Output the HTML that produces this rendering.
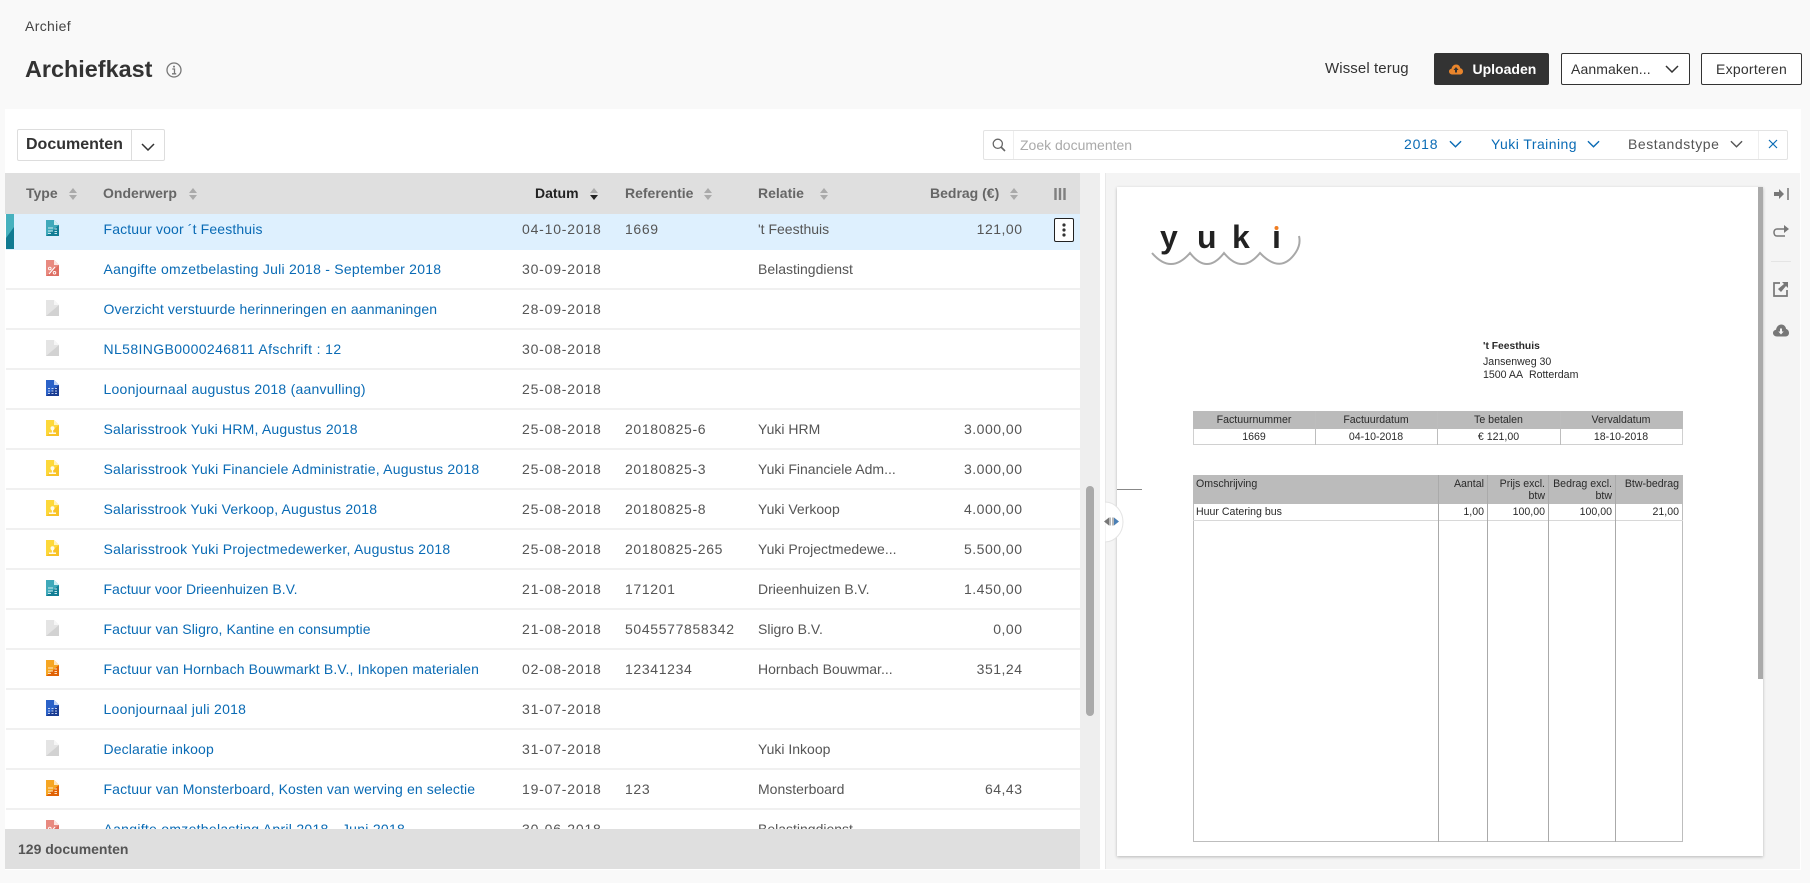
<!DOCTYPE html>
<html lang="nl"><head><meta charset="utf-8"><title>Archiefkast</title>
<style>
*{box-sizing:border-box}
html,body{margin:0;padding:0;width:1810px;height:883px;overflow:hidden;background:#f9f9f9;font-family:"Liberation Sans",sans-serif;color:#555}
.a{position:absolute;white-space:nowrap}
#panel{position:absolute;left:5px;top:109px;width:1796px;height:761px;background:#fff}
.btn{position:absolute;top:53px;height:32px;border:1px solid #333;border-radius:2px;background:#fff;color:#333;font-size:14px;line-height:30px;white-space:nowrap}
.hd{position:absolute;top:173px;height:41px;line-height:41px;font-size:14px;font-weight:bold;color:#666;white-space:nowrap}
#rows{position:absolute;left:6px;top:214px;width:1074px;height:615px;overflow:hidden}
.r{position:absolute;left:0;width:1074px;height:40px;border-bottom:2px solid #f0f0f0;font-size:14px;line-height:39px;color:#555}
.r span{position:absolute;top:0;white-space:nowrap}
.r svg{position:absolute;left:40px;top:10px;width:13px;height:16px}
.s{left:97.500px;color:#0a6bb5}.d{left:516px;letter-spacing:.8px}.f{left:619px;letter-spacing:.65px}.e{left:752px}
.b{right:57.500px;letter-spacing:.5px}
.doc{position:absolute;font-size:10.600px;color:#2a2a2a;line-height:12px;white-space:nowrap}
.ph{position:absolute;background:#bbb}
.ln{position:absolute;background:#bdbdbd}
.c{text-align:center}
</style></head><body>
<svg width="0" height="0" style="position:absolute">
<defs>
<symbol id="i-teal" viewBox="0 0 13 16"><path d="M0 0H8L13 5V16H0Z" fill="#3fa9ba"/><path d="M0 16L13 5V16Z" fill="#127d94"/><path d="M8 0L13 5H8Z" fill="#cfeef2"/><path d="M2 8H7M2 11H7M2 13.500H5M8.500 9H11M8.500 11.500H11M8.500 13.500H11" stroke="#e8f7f9" stroke-width="1" stroke-opacity=".85"/></symbol>
<symbol id="i-red" viewBox="0 0 13 16"><path d="M0 0H8L13 5V16H0Z" fill="#e88a80"/><path d="M0 16L13 5V16Z" fill="#dd6e63"/><path d="M8 0L13 5H8Z" fill="#fbe4e1"/><path d="M3 14L9 7" stroke="#fff" stroke-width="1"/><circle cx="3.800" cy="8.500" r="1.300" fill="none" stroke="#fff" stroke-width=".9"/><circle cx="8.500" cy="12.800" r="1.300" fill="none" stroke="#fff" stroke-width=".9"/></symbol>
<symbol id="i-gray" viewBox="0 0 13 16"><path d="M0 0H8L13 5V16H0Z" fill="#e4e4e4"/><path d="M0 16L13 5V16Z" fill="#d2d2d2"/><path d="M8 0L13 5H8Z" fill="#f6f6f6"/></symbol>
<symbol id="i-blue" viewBox="0 0 13 16"><path d="M0 0H8L13 5V16H0Z" fill="#2b62c8"/><path d="M0 16L13 5V16Z" fill="#1a3c92"/><path d="M8 0L13 5H8Z" fill="#c6d6f3"/><path d="M2 8.500H4M5.500 8.500H7.500M9 8.500H11M2 11H4M5.500 11H7.500M9 11H11M2 13.500H4M5.500 13.500H7.500M9 13.500H11" stroke="#dfe8fa" stroke-width="1" stroke-opacity=".85"/></symbol>
<symbol id="i-yellow" viewBox="0 0 13 16"><path d="M0 0H8L13 5V16H0Z" fill="#fdd83a"/><path d="M0 16L13 5V16Z" fill="#f8c326"/><path d="M8 0L13 5H8Z" fill="#fff3bd"/><circle cx="6.500" cy="8.300" r="2" fill="#fff" fill-opacity=".9"/><path d="M3 12.500H10V14H3Z" fill="#fff" fill-opacity=".9"/><path d="M5.800 10H7.200V12.500H5.800Z" fill="#fff" fill-opacity=".9"/></symbol>
<symbol id="i-orange" viewBox="0 0 13 16"><path d="M0 0H8L13 5V16H0Z" fill="#f6a623"/><path d="M0 16L13 5V16Z" fill="#e06206"/><path d="M8 0L13 5H8Z" fill="#fde6bf"/><path d="M2 8H7M2 11H7M2 13.500H5M8.500 9H11M8.500 11.500H11M8.500 13.500H11" stroke="#fff4e2" stroke-width="1" stroke-opacity=".85"/></symbol>
<symbol id="sort" viewBox="0 0 8 12"><path d="M4 0L8 5H0Z" fill="#aaa"/><path d="M4 12L8 7H0Z" fill="#aaa"/></symbol>
<symbol id="chev" viewBox="0 0 14 8"><path d="M1 1L7 7L13 1" fill="none" stroke="currentColor" stroke-width="1.500"/></symbol>
</defs></svg>

<div class="a" style="left:25px;top:18px;font-size:14px;letter-spacing:.35px;line-height:16px;color:#444">Archief</div>
<div class="a" style="left:25px;top:54px;font-size:23.400px;line-height:30px;font-weight:bold;color:#333">Archiefkast</div>
<svg class="a" style="left:166px;top:62px" width="16" height="16" viewBox="0 0 16 16"><circle cx="8" cy="8" r="7" fill="none" stroke="#777" stroke-width="1.300"/><circle cx="8" cy="4.600" r="1" fill="#777"/><path d="M6.300 7H8.500V11.500M6 11.800H10.200" fill="none" stroke="#777" stroke-width="1.300"/></svg>

<div class="a" style="left:1325px;top:61px;font-size:15px;letter-spacing:.1px;line-height:16px;color:#333">Wissel terug</div>
<div class="btn" style="left:1434px;width:115px;background:#333;color:#fff;font-weight:bold;padding-left:37.500px">Uploaden</div>
<svg class="a" style="left:1449px;top:64px" width="14" height="11" viewBox="0 0 14 11"><path d="M3.500 10.500C1.500 10.500 0 9.200 0 7.500C0 6 1.200 5 2.500 4.800C3 2.200 5 .5 7.200 .5C9.500 .5 11 2.200 11.300 4.300C12.800 4.500 14 5.800 14 7.500C14 9.200 12.800 10.500 11 10.500Z" fill="#e9852c"/><path d="M7 3L9.500 6H8V8.500H6V6H4.500Z" fill="#333"/></svg>
<div class="btn" style="left:1561px;width:129px;padding-left:9px;letter-spacing:.1px">Aanmaken...</div>
<svg class="a" style="left:1665px;top:65px;color:#333" width="14" height="8"><use href="#chev"/></svg>
<div class="btn" style="left:1701px;width:101px;text-align:center;letter-spacing:.25px">Exporteren</div>

<div id="panel"></div>

<div class="a" style="left:17px;top:129px;width:148px;height:32px;border:1px solid #ddd;border-radius:2px;background:#fff"></div>
<div class="a" style="left:131px;top:130px;width:1px;height:30px;background:#ddd"></div>
<div class="a" style="left:26px;top:135px;font-size:16px;line-height:19px;font-weight:bold;color:#333">Documenten</div>
<svg class="a" style="left:141px;top:143px;color:#333" width="14" height="8"><use href="#chev"/></svg>

<div class="a" style="left:983px;top:130px;width:805px;height:30px;border:1px solid #e3e3e3;border-radius:2px;background:#fff"></div>
<div class="a" style="left:1013px;top:131px;width:1px;height:28px;background:#eee"></div>
<div class="a" style="left:1758px;top:131px;width:1px;height:28px;background:#eee"></div>
<svg class="a" style="left:992px;top:138px" width="14" height="14" viewBox="0 0 14 14"><circle cx="5.800" cy="5.800" r="4.600" fill="none" stroke="#666" stroke-width="1.300"/><path d="M9 9L13 13" stroke="#666" stroke-width="1.600"/></svg>
<div class="a" style="left:1020px;top:137px;font-size:14px;line-height:16px;color:#aaa">Zoek documenten</div>
<div class="a" style="left:1404px;top:136px;font-size:14px;letter-spacing:.8px;line-height:16px;color:#0a6bb5">2018</div>
<svg class="a" style="left:1449px;top:140px;color:#0a6bb5" width="13" height="8"><use href="#chev"/></svg>
<div class="a" style="left:1491px;top:136px;font-size:14px;letter-spacing:.45px;line-height:16px;color:#0a6bb5">Yuki Training</div>
<svg class="a" style="left:1587px;top:140px;color:#0a6bb5" width="13" height="8"><use href="#chev"/></svg>
<div class="a" style="left:1628px;top:136px;font-size:14px;letter-spacing:.55px;line-height:16px;color:#555">Bestandstype</div>
<svg class="a" style="left:1730px;top:140px;color:#555" width="13" height="8"><use href="#chev"/></svg>
<svg class="a" style="left:1768px;top:139px" width="10" height="10" viewBox="0 0 10 10"><path d="M1 1L9 9M9 1L1 9" stroke="#0a6bb5" stroke-width="1.200"/></svg>

<div class="a" style="left:5px;top:173px;width:1075px;height:41px;background:#dfdfdf"></div>
<div class="hd" style="left:26px">Type</div>
<svg class="a" style="left:69px;top:188px" width="8" height="12"><use href="#sort"/></svg>
<div class="hd" style="left:103px">Onderwerp</div>
<svg class="a" style="left:189px;top:188px" width="8" height="12"><use href="#sort"/></svg>
<div class="hd" style="left:535px;color:#222">Datum</div>
<svg class="a" style="left:590px;top:188px" width="8" height="12" viewBox="0 0 8 12"><path d="M4 0L8 5H0Z" fill="#aaa"/><path d="M4 12L8 7H0Z" fill="#222"/></svg>
<div class="hd" style="left:625px">Referentie</div>
<svg class="a" style="left:704px;top:188px" width="8" height="12"><use href="#sort"/></svg>
<div class="hd" style="left:758px">Relatie</div>
<svg class="a" style="left:820px;top:188px" width="8" height="12"><use href="#sort"/></svg>
<div class="hd" style="left:930px">Bedrag (€)</div>
<svg class="a" style="left:1010px;top:188px" width="8" height="12"><use href="#sort"/></svg>
<svg class="a" style="left:1054px;top:188px" width="12" height="12" viewBox="0 0 12 12"><path d="M1.500 0V12M6 0V12M10.500 0V12" stroke="#808080" stroke-width="2.400"/></svg>

<div id="rows">
<div class="r" style="top:-4px;background:#def0fe;border-bottom:0;height:40px"><svg><use href="#i-teal"/></svg><span class="s" style="letter-spacing:.14px">Factuur voor ´t Feesthuis</span><span class="d">04-10-2018</span><span class="f">1669</span><span class="e">'t Feesthuis</span><span class="b">121,00</span></div>
<div class="r" style="top:36px"><svg><use href="#i-red"/></svg><span class="s" style="letter-spacing:.25px">Aangifte omzetbelasting Juli 2018 - September 2018</span><span class="d">30-09-2018</span><span class="e">Belastingdienst</span></div>
<div class="r" style="top:76px"><svg><use href="#i-gray"/></svg><span class="s" style="letter-spacing:.14px">Overzicht verstuurde herinneringen en aanmaningen</span><span class="d">28-09-2018</span></div>
<div class="r" style="top:116px"><svg><use href="#i-gray"/></svg><span class="s" style="letter-spacing:.38px">NL58INGB0000246811 Afschrift : 12</span><span class="d">30-08-2018</span></div>
<div class="r" style="top:156px"><svg><use href="#i-blue"/></svg><span class="s" style="letter-spacing:.24px">Loonjournaal augustus 2018 (aanvulling)</span><span class="d">25-08-2018</span></div>
<div class="r" style="top:196px"><svg><use href="#i-yellow"/></svg><span class="s" style="letter-spacing:.19px">Salarisstrook Yuki HRM, Augustus 2018</span><span class="d">25-08-2018</span><span class="f">20180825-6</span><span class="e">Yuki HRM</span><span class="b">3.000,00</span></div>
<div class="r" style="top:236px"><svg><use href="#i-yellow"/></svg><span class="s" style="letter-spacing:.22px">Salarisstrook Yuki Financiele Administratie, Augustus 2018</span><span class="d">25-08-2018</span><span class="f">20180825-3</span><span class="e">Yuki Financiele Adm...</span><span class="b">3.000,00</span></div>
<div class="r" style="top:276px"><svg><use href="#i-yellow"/></svg><span class="s" style="letter-spacing:.17px">Salarisstrook Yuki Verkoop, Augustus 2018</span><span class="d">25-08-2018</span><span class="f">20180825-8</span><span class="e">Yuki Verkoop</span><span class="b">4.000,00</span></div>
<div class="r" style="top:316px"><svg><use href="#i-yellow"/></svg><span class="s" style="letter-spacing:.23px">Salarisstrook Yuki Projectmedewerker, Augustus 2018</span><span class="d">25-08-2018</span><span class="f">20180825-265</span><span class="e">Yuki Projectmedewe...</span><span class="b">5.500,00</span></div>
<div class="r" style="top:356px"><svg><use href="#i-teal"/></svg><span class="s">Factuur voor Drieenhuizen B.V.</span><span class="d">21-08-2018</span><span class="f">171201</span><span class="e">Drieenhuizen B.V.</span><span class="b">1.450,00</span></div>
<div class="r" style="top:396px"><svg><use href="#i-gray"/></svg><span class="s" style="letter-spacing:.08px">Factuur van Sligro, Kantine en consumptie</span><span class="d">21-08-2018</span><span class="f">5045577858342</span><span class="e">Sligro B.V.</span><span class="b">0,00</span></div>
<div class="r" style="top:436px"><svg><use href="#i-orange"/></svg><span class="s" style="letter-spacing:.13px">Factuur van Hornbach Bouwmarkt B.V., Inkopen materialen</span><span class="d">02-08-2018</span><span class="f">12341234</span><span class="e">Hornbach Bouwmar...</span><span class="b">351,24</span></div>
<div class="r" style="top:476px"><svg><use href="#i-blue"/></svg><span class="s" style="letter-spacing:.26px">Loonjournaal juli 2018</span><span class="d">31-07-2018</span></div>
<div class="r" style="top:516px"><svg><use href="#i-gray"/></svg><span class="s" style="letter-spacing:.13px">Declaratie inkoop</span><span class="d">31-07-2018</span><span class="e">Yuki Inkoop</span></div>
<div class="r" style="top:556px"><svg><use href="#i-orange"/></svg><span class="s" style="letter-spacing:.12px">Factuur van Monsterboard, Kosten van werving en selectie</span><span class="d">19-07-2018</span><span class="f">123</span><span class="e">Monsterboard</span><span class="b">64,43</span></div>
<div class="r" style="top:596px"><svg><use href="#i-red"/></svg><span class="s" style="letter-spacing:.28px">Aangifte omzetbelasting April 2018 - Juni 2018</span><span class="d">30-06-2018</span><span class="e">Belastingdienst</span></div>
</div>

<svg class="a" style="left:6px;top:214px" width="8" height="35" viewBox="0 0 8 35"><rect width="8" height="35" fill="#107a91"/><path d="M0 0H8V13L0 24Z" fill="#46b1be"/></svg>
<div class="a" style="left:1054px;top:218px;width:20px;height:24px;border:1px solid #222;border-radius:2px;background:#fff"></div>
<svg class="a" style="left:1062px;top:223px" width="4" height="14" viewBox="0 0 4 14"><circle cx="2" cy="2" r="1.600" fill="#333"/><circle cx="2" cy="7" r="1.600" fill="#333"/><circle cx="2" cy="12" r="1.600" fill="#333"/></svg>

<div class="a" style="left:5px;top:829px;width:1075px;height:40px;background:#dfdfdf;line-height:40px;padding-left:13px;font-size:14px;font-weight:bold;color:#555">129 documenten</div>

<div class="a" style="left:1080px;top:173px;width:20px;height:696px;background:#eee"></div>
<div class="a" style="left:1086px;top:486px;width:8px;height:230px;background:#aaa;border-radius:4px"></div>

<div class="a" style="left:1105px;top:173px;width:695px;height:696px;background:#f4f4f4;border-left:1px solid #e8e8e8"></div>
<div class="a" style="left:1117px;top:187px;width:646px;height:669px;background:#fff;box-shadow:0 1px 3px rgba(0,0,0,.25)"></div>
<div class="a" style="left:1758px;top:187px;width:5px;height:492px;background:#aaa"></div>
<div class="a" style="left:1117px;top:489px;width:25px;height:1px;background:#888"></div>

<svg class="a" style="left:1105px;top:501px" width="19" height="42" viewBox="0 0 19 42"><path d="M0 1A18 20 0 0 1 0 41Z" fill="#fff" stroke="#e4e4e4"/></svg>
<svg class="a" style="left:1104px;top:517px" width="15" height="9" viewBox="0 0 15 9"><path d="M0 4.500L5 .5V8.500Z" fill="#777"/><path d="M15 4.500L10 .5V8.500Z" fill="#4a7fb5"/><path d="M6 .5V8.500M9 .5V8.500" stroke="#999" stroke-width="1.400"/></svg>

<svg class="a" style="left:1151px;top:222px" width="152" height="46" viewBox="0 0 152 46">
<path d="M1 31Q20 53 39 31Q56 53 73 31Q91 53 109 31Q130 53 145 30Q150 22 148 14" fill="none" stroke="#a8a8a8" stroke-width="2"/>
<circle cx="125.500" cy="6" r="2" fill="#ef7d22"/></svg>
<div class="a" style="left:1160px;top:222px;font-size:32px;line-height:30px;font-weight:bold;color:#222">y</div>
<div class="a" style="left:1197px;top:222px;font-size:32px;line-height:30px;font-weight:bold;color:#222">u</div>
<div class="a" style="left:1232px;top:222px;font-size:32px;line-height:30px;font-weight:bold;color:#222">k</div>
<div class="a" style="left:1272px;top:222px;font-size:32px;line-height:30px;font-weight:bold;color:#222">ı</div>

<div class="doc" style="left:1483px;top:341px;font-weight:bold;font-size:10.300px">'t Feesthuis</div>
<div class="doc" style="left:1483px;top:356px">Jansenweg 30</div>
<div class="doc" style="left:1483px;top:369px">1500 AA&nbsp; Rotterdam</div>

<div class="ph" style="left:1193px;top:411px;width:490px;height:18px"></div>
<div class="ln" style="left:1193px;top:429px;width:1px;height:16px;background:#d0d0d0"></div>
<div class="ln" style="left:1682px;top:429px;width:1px;height:16px;background:#d0d0d0"></div>
<div class="ln" style="left:1193px;top:444px;width:490px;height:1px;background:#d0d0d0"></div>
<div class="ln" style="left:1315px;top:411px;width:1px;height:34px"></div>
<div class="ln" style="left:1437px;top:411px;width:1px;height:34px"></div>
<div class="ln" style="left:1560px;top:411px;width:1px;height:34px"></div>
<div class="doc c" style="left:1193px;top:414px;width:122px">Factuurnummer</div>
<div class="doc c" style="left:1315px;top:414px;width:122px">Factuurdatum</div>
<div class="doc c" style="left:1437px;top:414px;width:123px">Te betalen</div>
<div class="doc c" style="left:1560px;top:414px;width:122px">Vervaldatum</div>
<div class="doc c" style="left:1193px;top:431px;width:122px">1669</div>
<div class="doc c" style="left:1315px;top:431px;width:122px">04-10-2018</div>
<div class="doc c" style="left:1437px;top:431px;width:123px">€ 121,00</div>
<div class="doc c" style="left:1560px;top:431px;width:122px">18-10-2018</div>

<div class="ph" style="left:1193px;top:475px;width:490px;height:29px"></div>
<div class="ln" style="left:1193px;top:504px;width:1px;height:338px"></div>
<div class="ln" style="left:1682px;top:504px;width:1px;height:338px"></div>
<div class="ln" style="left:1193px;top:520px;width:490px;height:1px;background:#d8d8d8"></div>
<div class="ln" style="left:1193px;top:841px;width:490px;height:1px"></div>
<div class="ln" style="left:1438px;top:475px;width:1px;height:367px;background:#aaa"></div>
<div class="ln" style="left:1487px;top:475px;width:1px;height:367px;background:#aaa"></div>
<div class="ln" style="left:1548px;top:475px;width:1px;height:367px;background:#aaa"></div>
<div class="ln" style="left:1615px;top:475px;width:1px;height:367px;background:#aaa"></div>
<div class="doc" style="left:1196px;top:478px">Omschrijving</div>
<div class="doc" style="right:326px;top:478px">Aantal</div>
<div class="doc" style="right:265px;top:478px;text-align:right">Prijs excl.<br>btw</div>
<div class="doc" style="right:198px;top:478px;text-align:right">Bedrag excl.<br>btw</div>
<div class="doc" style="right:131px;top:478px">Btw-bedrag</div>
<div class="doc" style="left:1196px;top:506px">Huur Catering bus</div>
<div class="doc" style="right:326px;top:506px">1,00</div>
<div class="doc" style="right:265px;top:506px">100,00</div>
<div class="doc" style="right:198px;top:506px">100,00</div>
<div class="doc" style="right:131px;top:506px">21,00</div>

<svg class="a" style="left:1772px;top:186px" width="18" height="16" viewBox="0 0 18 16"><path d="M2 6H7V3L12 8L7 13V10H2Z" fill="#777"/><path d="M16 2V14" stroke="#777" stroke-width="1.500"/></svg>
<svg class="a" style="left:1772px;top:224px" width="18" height="16" viewBox="0 0 18 16"><path d="M12 5H5C3 5 2 6.500 2 8.500C2 10.500 3 12 5 12H13" fill="none" stroke="#777" stroke-width="1.500"/><path d="M12 1L17 5L12 9Z" fill="#777"/></svg>
<div class="a" style="left:1771px;top:261px;width:20px;height:1px;background:#e4e4e4"></div>
<svg class="a" style="left:1773px;top:281px" width="16" height="16" viewBox="0 0 16 16"><path d="M7 2H1V15H14V9" fill="none" stroke="#777" stroke-width="1.700"/><path d="M9 1H15V7L13 5L8 11L5 8L11 3Z" fill="#777"/></svg>
<svg class="a" style="left:1773px;top:324px" width="16" height="13" viewBox="0 0 16 13"><path d="M4 12.500C1.800 12.500 0 11 0 9C0 7.200 1.300 6 3 5.700C3.500 2.500 5.800 .5 8.300 .5C11 .5 12.800 2.500 13.100 5C14.800 5.300 16 7 16 9C16 11 14.600 12.500 12.500 12.500Z" fill="#777"/><path d="M8 10.500L5.300 7.500H7V4.500H9V7.500H10.700Z" fill="#f4f4f4"/></svg>
</body></html>
